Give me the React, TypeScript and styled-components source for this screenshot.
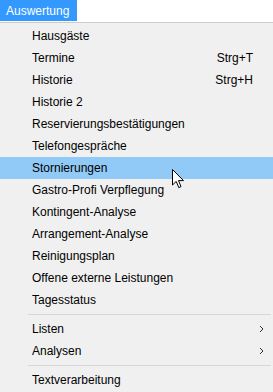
import React from "react";
import styled, { createGlobalStyle } from "styled-components";

type Entry =
  | { kind: "item"; label: string; shortcut?: string; sub?: boolean; active?: boolean }
  | { kind: "sep" };

const entries: Entry[] = [
  { kind: "item", label: "Hausgäste" },
  { kind: "item", label: "Termine", shortcut: "Strg+T" },
  { kind: "item", label: "Historie", shortcut: "Strg+H" },
  { kind: "item", label: "Historie 2" },
  { kind: "item", label: "Reservierungsbestätigungen" },
  { kind: "item", label: "Telefongespräche" },
  { kind: "item", label: "Stornierungen", active: true },
  { kind: "item", label: "Gastro-Profi Verpflegung" },
  { kind: "item", label: "Kontingent-Analyse" },
  { kind: "item", label: "Arrangement-Analyse" },
  { kind: "item", label: "Reinigungsplan" },
  { kind: "item", label: "Offene externe Leistungen" },
  { kind: "item", label: "Tagesstatus" },
  { kind: "sep" },
  { kind: "item", label: "Listen", sub: true },
  { kind: "item", label: "Analysen", sub: true },
  { kind: "sep" },
  { kind: "item", label: "Textverarbeitung" },
];

const App = () => {
  return (
    <>
      <GlobalStyle />
      <Window>
        <MenuBar>
          <BarButton $open>Auswertung</BarButton>
        </MenuBar>
        <Dropdown>
          {entries.map((e, i) =>
            e.kind === "sep" ? (
              <Separator key={i} />
            ) : (
              <Item key={i} $active={e.active}>
                <Label>{e.label}</Label>
                {e.shortcut && <Shortcut>{e.shortcut}</Shortcut>}
                {e.sub && (
                  <Arrow viewBox="0 0 5 8">
                    <path d="M1 1 L4 4 L1 7" fill="none" stroke="#333" strokeWidth="1" />
                  </Arrow>
                )}
                {e.active && (
                  <Cursor viewBox="0 0 12 20">
                    <path
                      d="M0.5 0.5 L0.5 16 L4.2 12.4 L6.8 18.6 L9 17.6 L6.5 11.6 L11.5 11.6 Z"
                      fill="#fff"
                      stroke="#000"
                      strokeWidth="1"
                      strokeLinejoin="miter"
                    />
                  </Cursor>
                )}
              </Item>
            )
          )}
        </Dropdown>
      </Window>
    </>
  );
};

export default App;

const GlobalStyle = createGlobalStyle`
  html, body {
    margin: 0;
    padding: 0;
    background: #f0f0f0;
  }
  body {
    font-family: "Liberation Sans", "Noto Sans", sans-serif;
    font-size: 12px;
    color: #000;
  }
`;

const Window = styled.div`
  width: 273px;
  height: 392px;
  display: flex;
  flex-direction: column;
  overflow: hidden;
`;

const MenuBar = styled.div`
  height: 22px;
  background: #fff;
  border-bottom: 1px solid #cccccc;
  display: flex;
`;

const BarButton = styled.div<{ $open?: boolean }>`
  width: 77px;
  box-sizing: border-box;
  height: 21px;
  padding: 0 0 0 6px;
  display: flex;
  align-items: center;
  background: ${({ $open }) => ($open ? "#3399ff" : "transparent")};
  color: ${({ $open }) => ($open ? "#fff" : "#000")};
`;

const Dropdown = styled.div`
  flex: 1;
  background: #f0f0f0;
  padding-top: 2px;
  display: flex;
  flex-direction: column;
`;

const Item = styled.div<{ $active?: boolean }>`
  position: relative;
  height: 22px;
  display: flex;
  align-items: center;
  padding: 0 20px 0 32px;
  background: ${({ $active }) => ($active ? "#91c9f7" : "transparent")};
`;

const Label = styled.span`
  flex: 1;
  white-space: nowrap;
`;

const Shortcut = styled.span`
  white-space: nowrap;
`;

const Arrow = styled.svg`
  width: 5px;
  height: 8px;
  margin-right: -11px;
`;

const Separator = styled.div`
  height: 7px;
  display: flex;
  align-items: center;
  padding-left: 28px;
  padding-right: 2px;

  &::after {
    content: "";
    flex: 1;
    height: 1px;
    background: #d7d7d7;
  }
`;

const Cursor = styled.svg`
  position: absolute;
  left: 172px;
  top: 12px;
  width: 12px;
  height: 20px;
  overflow: visible;
`;
